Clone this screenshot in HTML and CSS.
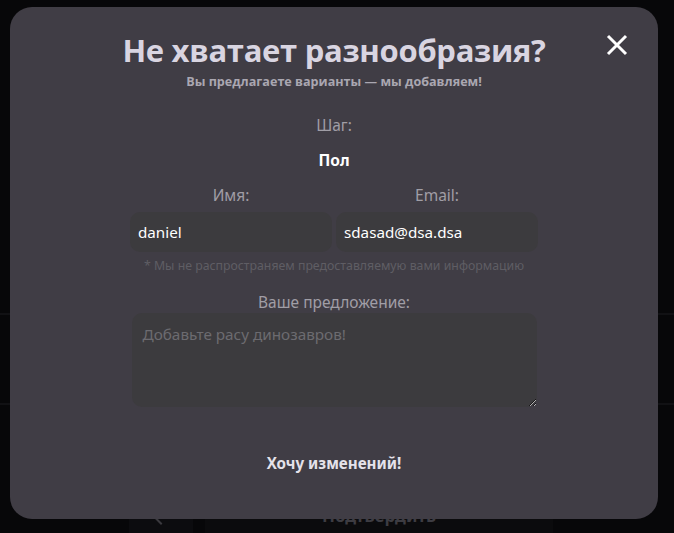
FILE: index.html
```html
<!DOCTYPE html>
<html lang="ru">
<head>
<meta charset="utf-8">
<link rel="stylesheet" href="styles.css">
</head>
<body>
<div class="page">
  <div class="bg-rows">
    <div class="bg-row r1"></div>
    <div class="bg-row r2"></div>
  </div>
  <div class="bg-bar">
    <div class="bg-back"><span class="chev"></span></div>
    <div class="bg-confirm">Подтвердить</div>
  </div>
</div>
<div class="modal">
  <button class="close" aria-label="close">
    <svg width="22" height="22" viewBox="0 0 22 22"><path d="M2 2 L20 20 M20 2 L2 20" stroke="#ffffff" stroke-width="3" stroke-linecap="butt"/></svg>
  </button>
  <h1 class="title">Не хватает разнообразия?</h1>
  <p class="subtitle">Вы предлагаете варианты — мы добавляем!</p>
  <div class="label step-label">Шаг:</div>
  <div class="step">Пол</div>
  <div class="pair">
    <div class="field">
      <div class="label">Имя:</div>
      <input class="input" type="text" value="daniel">
    </div>
    <div class="field">
      <div class="label">Email:</div>
      <input class="input" type="text" value="sdasad@dsa.dsa">
    </div>
  </div>
  <div class="note">* Мы не распространяем предоставляемую вами информацию</div>
  <div class="label">Ваше предложение:</div>
  <textarea class="area" placeholder="Добавьте расу динозавров!"></textarea>
  <button class="submit">Хочу изменений!</button>
</div>
</body>
</html>
```

FILE: styles.css
```css
* { box-sizing: border-box; }
html, body { margin: 0; padding: 0; }
body {
  width: 674px;
  height: 533px;
  overflow: hidden;
  background: #070709;
  font-family: "Noto Sans", "Open Sans", sans-serif;
  position: relative;
}
.page {
  height: 533px;
  display: flex;
  flex-direction: column;
  justify-content: flex-end;
}
.bg-rows {
  position: absolute;
  left: 0; right: 0; top: 313px;
}
.bg-row { height: 90px; border-top: 2px solid #111114; }
.bg-bar {
  display: flex;
  height: 40px;
  padding-left: 129px;
  gap: 12px;
  align-items: stretch;
}
.bg-back {
  width: 64px;
  background: #0c0c0f;
  display: flex;
  align-items: center;
  justify-content: center;
}
.chev {
  width: 14px; height: 14px;
  border-left: 2px solid #3a393e;
  border-top: 2px solid #3a393e;
  transform: rotate(-45deg);
  margin-top: 4px;
}
.bg-confirm {
  width: 348px;
  background: #0b0b0d;
  color: #3d3c42;
  font-weight: 700;
  font-size: 17px;
  padding-top: 11px;
  text-align: center;
}
.modal {
  position: absolute;
  left: 10px;
  top: 7px;
  width: 648px;
  height: 512px;
  background: #403d45;
  border-radius: 22px;
  display: flex;
  flex-direction: column;
  align-items: center;
  padding-top: 25px;
}
.close {
  position: absolute;
  right: 30px;
  top: 27px;
  width: 22px;
  height: 22px;
  padding: 0;
  border: 0;
  background: none;
  display: flex;
}
.title {
  margin: 0;
  font-family: "Open Sans", sans-serif;
  font-weight: 700;
  font-size: 31px;
  line-height: 36px;
  color: #d9d5e1;
  letter-spacing: -0.3px;
}
.subtitle {
  margin: 6px 0 0;
  font-family: "Open Sans", sans-serif;
  font-weight: 700;
  font-size: 12.6px;
  line-height: 16px;
  color: #aaa7b1;
}
.label {
  font-size: 15.5px;
  line-height: 20px;
  color: #a09ea6;
}
.step-label { margin-top: 25px; }
.step {
  margin-top: 15px;
  font-size: 15.5px;
  line-height: 20px;
  font-weight: 700;
  color: #ffffff;
}
.pair {
  margin-top: 15px;
  display: flex;
  gap: 4px;
}
.field {
  width: 202px;
  display: flex;
  flex-direction: column;
  align-items: center;
  gap: 7px;
}
.input {
  width: 202px;
  height: 40px;
  border: 0;
  border-radius: 10px;
  background: #3c3b3e;
  color: #ffffff;
  font-family: "Noto Sans", sans-serif;
  font-size: 15.2px;
  padding: 0 8px;
  outline: none;
}
.note {
  margin-top: 6px;
  font-size: 12.3px;
  line-height: 16px;
  color: #5f5d64;
}
.note + .label { margin-top: 18px; }
.area {
  margin-top: 1px;
  width: 405px;
  height: 94px;
  border: 0;
  border-radius: 10px;
  background: #3c3b3e;
  color: #ffffff;
  font-family: "Noto Sans", sans-serif;
  font-size: 15.3px;
  padding: 11px 11px;
  outline: none;
  resize: both;
}
.area::placeholder { color: #6c6b70; }
.submit {
  margin-top: 46px;
  border: 0;
  background: none;
  padding: 0;
  font-family: "Noto Sans", sans-serif;
  font-weight: 700;
  font-size: 15.2px;
  line-height: 20px;
  color: #e4e2ea;
}
```
